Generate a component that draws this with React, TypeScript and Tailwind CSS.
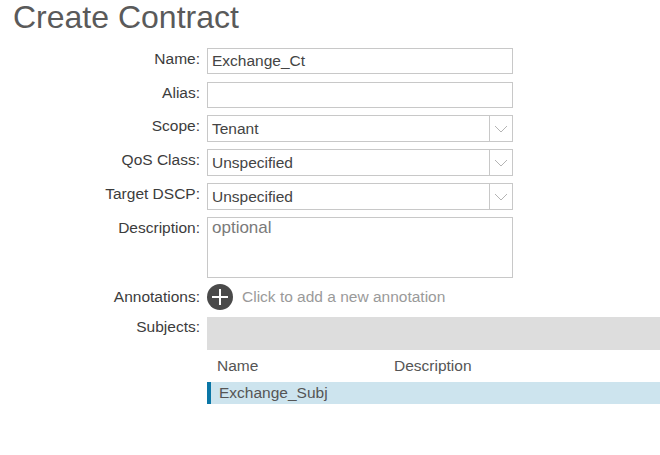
import { ReactNode } from 'react';

// Thin chevron used in the select boxes
const Chevron = () => (
  <svg width="14" height="8" viewBox="0 0 14 8" fill="none">
    <path d="M1 1L7 7L13 1" stroke="#b4b4b4" strokeWidth="1" />
  </svg>
);

const PlusCircle = () => (
  <svg width="26" height="26" viewBox="0 0 26 26">
    <circle cx="13" cy="13" r="13" fill="#4a4a4a" />
    <path d="M13 5V21M5 13H21" stroke="#ffffff" strokeWidth="2" />
  </svg>
);

interface RowProps {
  label: string;
  children: ReactNode;
  className?: string;
  labelClass?: string;
}

const Row = ({ label, children, className = '', labelClass = 'pt-[2px]' }: RowProps) => (
  <div className={`flex ${className}`}>
    <div className={`w-[200px] shrink-0 text-right text-[15.5px] leading-[17px] text-[#3c3c3c] ${labelClass}`}>{label}</div>
    <div className="ml-[7px] flex-1 min-w-0">{children}</div>
  </div>
);

const TextBox = ({ value, h = 'h-[26px]' }: { value?: string; h?: string }) => (
  <div className={`w-[306px] ${h} border border-[#c8c8c8] bg-white px-[4px] text-[15.5px] leading-[24px] text-[#444]`}>
    {value}
  </div>
);

const SelectBox = ({ value }: { value: string }) => (
  <div className="w-[306px] h-[27px] border border-[#c8c8c8] bg-white flex">
    <div className="flex-1 px-[4px] text-[15.5px] leading-[25px] text-[#444]">{value}</div>
    <div className="w-[23px] border-l border-[#c8c8c8] flex items-center justify-center">
      <Chevron />
    </div>
  </div>
);

export default function App() {
  return (
    <div className="w-[660px] h-[455px] overflow-hidden bg-white font-['Liberation_Sans',Arial,sans-serif]">
      <h1 className="pl-[13px] pt-[1px] text-[32px] leading-[32px] text-[#5a5a5a]">Create Contract</h1>

      <div className="mt-[15px] flex flex-col">
        <Row label="Name:">
          <TextBox value="Exchange_Ct" />
        </Row>
        <Row label="Alias:" className="mt-[8px]">
          <TextBox />
        </Row>
        <Row label="Scope:" className="mt-[7px]">
          <SelectBox value="Tenant" />
        </Row>
        <Row label="QoS Class:" className="mt-[7px]">
          <SelectBox value="Unspecified" />
        </Row>
        <Row label="Target DSCP:" className="mt-[7px]">
          <SelectBox value="Unspecified" />
        </Row>
        <Row label="Description:" className="mt-[7px]">
          <div className="w-[306px] h-[61px] border border-[#c8c8c8] bg-white px-[4px] text-[17px] leading-[20px] text-[#7a7a7a]">
            optional
          </div>
        </Row>
        <Row label="Annotations:" className="mt-[6px] items-center" labelClass="pb-[2px]">
          <div className="flex items-center">
            <PlusCircle />
            <span className="ml-[9px] text-[15.5px] text-[#9a9a9a]">Click to add a new annotation</span>
          </div>
        </Row>
        <Row label="Subjects:" className="mt-[7px]" labelClass="pt-[1px]">
          <div className="h-[33px] bg-[#dddddd]" />
          <div className="h-[32px] flex items-center text-[15.5px] text-[#555]">
            <div className="w-[177px] pl-[10px]">Name</div>
            <div className="pl-[10px]">Description</div>
          </div>
          <div className="h-[22px] flex bg-[#cde4ee]">
            <div className="w-[4px] bg-[#0a76a6]" />
            <div className="pl-[8px] text-[15.5px] leading-[22px] text-[#555]">Exchange_Subj</div>
          </div>
        </Row>
      </div>
    </div>
  );
}
